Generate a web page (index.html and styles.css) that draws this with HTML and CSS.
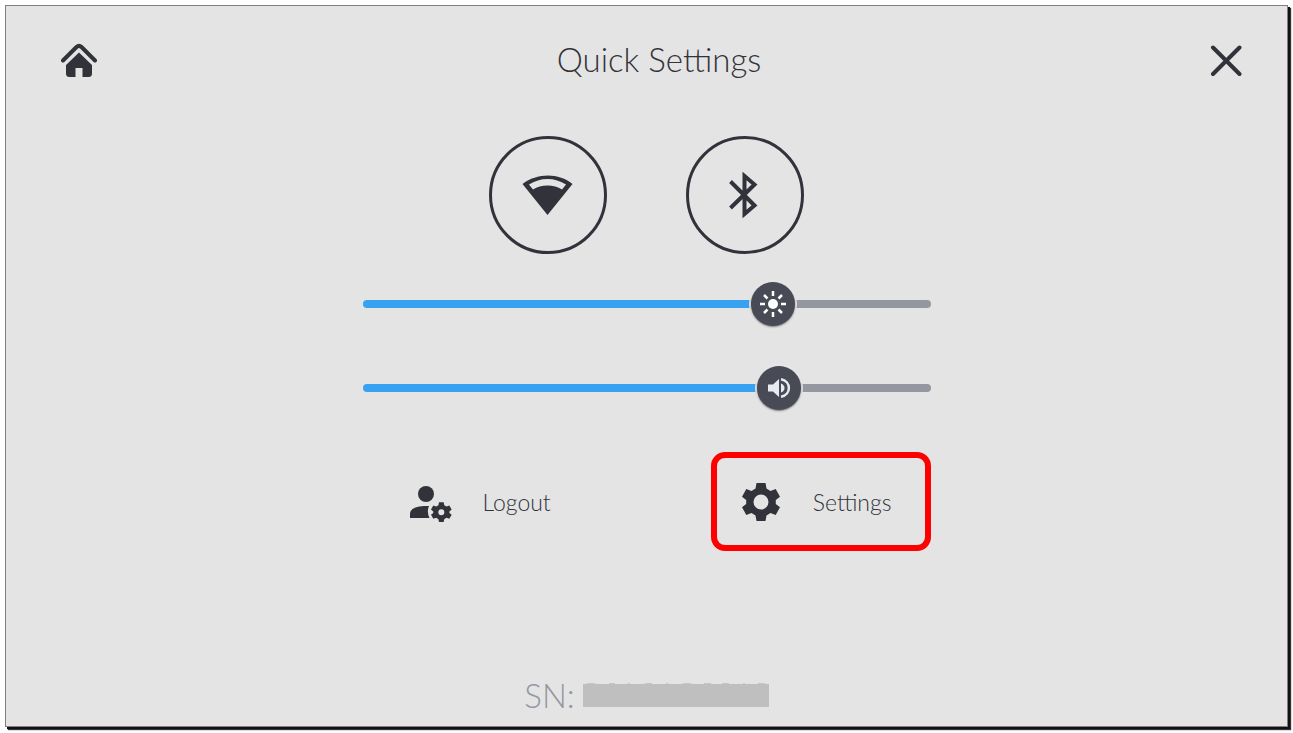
FILE: index.html
```
<!DOCTYPE html>
<html lang="en">
<head>
    <meta charset="UTF-8">
    <meta name="viewport" content="width=device-width, initial-scale=1.0">
    <title>Quick Settings</title>
    <link rel="stylesheet" href="styles.css">
</head>
<body>

<div class="panel">
    <header class="top-bar">
        <button class="icon-button home" type="button" aria-label="Home">
            <svg width="36" height="36" viewBox="0 0 36 36">
                <path d="M2 17.500 L15.500 4 Q18 1.700 20.500 4 L34 17.500" fill="none" stroke="currentColor" stroke-width="4" stroke-linecap="round"/>
                <path d="M18 9.500 L31 22 V30.500 Q31 34 27.500 34 H21.500 V25 H14.500 V34 H8.500 Q5 34 5 30.500 V22 Z" fill="currentColor"/>
            </svg>
        </button>
        <h1>Quick Settings</h1>
        <button class="icon-button" type="button" aria-label="Close">
            <svg width="32" height="32" viewBox="0 0 32 32">
                <path d="M3 2.500 L29.500 29 M29.500 2.500 L3 29" fill="none" stroke="currentColor" stroke-width="4" stroke-linecap="round"/>
            </svg>
        </button>
    </header>

    <main class="controls">
        <div class="toggles">
            <button class="toggle" type="button" aria-label="Wi-Fi">
                <svg width="52" height="42" viewBox="0 0 52 42">
                    <path fill="currentColor" fill-rule="evenodd" d="M.5 10 C15 -1.500 37 -1.500 50.500 10 L25.500 41 Z M7 10.500 L11 15.500 C19 10 32 10 40 15.500 L44 10.500 C33 3 18 3 7 10.500 Z"/>
                </svg>
            </button>
            <button class="toggle" type="button" aria-label="Bluetooth">
                <svg width="32" height="46" viewBox="0 0 32 46">
                    <path d="M1.500 9.500 L25.500 33.500 L15.500 42 V4 L25.500 12.500 L1.500 36" fill="none" stroke="currentColor" stroke-width="4"/>
                </svg>
            </button>
        </div>

        <div class="slider" style="--value: 0.742">
            <input type="range" min="0" max="1" step="0.001" value="0.742" aria-label="Brightness">
            <svg class="slider-icon" viewBox="0 0 44 44">
                <circle cx="22" cy="22" r="5" fill="#fff"/>
                <g stroke="#fff" stroke-width="2.500">
                    <path d="M22 9 V14 M22 30 V35 M9 22 H14 M30 22 H35 M13 13 L16.500 16.500 M27.500 27.500 L31 31 M31 13 L27.500 16.500 M16.500 27.500 L13 31"/>
                </g>
            </svg>
        </div>
        <div class="slider" style="--value: 0.753">
            <input type="range" min="0" max="1" step="0.001" value="0.753" aria-label="Volume">
            <svg class="slider-icon" viewBox="0 0 44 44">
                <path d="M11 18.500 H16 L22 13 V31 L16 25.500 H11 Z" fill="#e8eaf2"/>
                <path d="M24 17.500 Q27.500 19 27.500 22 Q27.500 25 24 26.500 Z" fill="#e8eaf2"/>
                <path d="M24 13.300 C34.500 15 34.500 29 24 30.700" fill="none" stroke="#e8eaf2" stroke-width="2.500"/>
            </svg>
        </div>

        <div class="actions">
            <button class="action" type="button">
                <svg width="44" height="40" viewBox="0 0 44 40">
                    <g fill="currentColor">
                        <circle cx="17" cy="12" r="8"/>
                        <path d="M1 36 V32 C1 26 9 23.500 20 24 Q17.500 30 20.500 36 Z"/>
                        <path fill-rule="evenodd" d="M30.300 20 h5 l.6 3.100 2.400 1.400 3-1.100 2.500 4.300-2.400 2 v1.600 l2.400 2-2.500 4.300-3-1.100-2.400 1.400-.6 3.100 h-5 l-.6-3.100-2.400-1.400-3 1.100-2.500-4.300 2.400-2 v-1.600 l-2.400-2 2.500-4.300 3 1.100 2.400-1.400 Z M36 30.500 a3.200 3.200 0 1 0-6.400 0 3.200 3.200 0 1 0 6.400 0 Z" transform="translate(1.500 1.500) scale(.94)"/>
                    </g>
                </svg>
                <span>Logout</span>
            </button>
            <button class="action highlighted" type="button">
                <svg width="38" height="40" viewBox="0 0 38 40">
                    <path fill="currentColor" fill-rule="evenodd" d="M14.500 1 H23.500 L24.500 6.500 L28.500 9 L33.700 7 L38 14.800 L33.800 18 V22 L38 25.200 L33.700 33 L28.500 31 L24.500 33.500 L23.500 39 H14.500 L13.500 33.500 L9.500 31 L4.300 33 L0 25.200 L4.200 22 V18 L0 14.800 L4.300 7 L9.500 9 L13.500 6.500 Z M26.500 20 a7.500 7.500 0 1 0-15 0 a7.500 7.500 0 1 0 15 0 Z"/>
                </svg>
                <span>Settings</span>
            </button>
        </div>
    </main>

    <footer class="serial">
        <span>SN:</span>
        <svg class="serial-mask" width="186" height="24" viewBox="0 0 186 24">
            <path d="M4 .5 H12 M26 .5 H32 M45 .5 H47 M62 .5 H69 M83 .5 H85 M100 .5 H108 M121 .5 H128 M139 .5 H146 M160 .5 H162 M175 .5 H182" stroke="#c4c5c9"/>
            <rect y="1" width="186" height="23" fill="#bfbfbf"/>
        </svg>
    </footer>
</div>

</body>
</html>
```

FILE: styles.css
```
* {
    box-sizing: border-box;
}
body {
    margin: 0;
    padding: 5px 5px 6px;
    background-color: #fff;
    font-family: Lato, "Liberation Sans", sans-serif;
    font-weight: 300;
    color: #32333a;
}
button {
    padding: 0;
    border: none;
    background: none;
    font: inherit;
    color: inherit;
    cursor: pointer;
}
svg {
    display: block;
    flex-shrink: 0;
}
.panel {
    display: flex;
    flex-direction: column;
    min-height: calc(100vh - 11px);
    padding-bottom: 11px;
    background-color: #e4e4e4;
    border: 1px solid #7f7f7f;
    box-shadow: 2px 2px 0 #111, 3px 3px 1px #333;
}
.top-bar {
    display: flex;
    align-items: center;
    justify-content: space-between;
    height: 110px;
    padding: 0 45px 0 55px;
}
.home {
    width: 47px;
}
.top-bar h1 {
    margin: 0 0 4px;
    font-size: 33px;
    line-height: 40px;
    font-weight: 300;
}
.controls {
    width: 568px;
    max-width: 100%;
    margin: 0 auto;
}
.toggles {
    display: flex;
    justify-content: center;
    gap: 79px;
    padding: 20px 0 28px;
}
.toggle {
    display: flex;
    align-items: center;
    justify-content: center;
    width: 118px;
    height: 118px;
    border: 3px solid #32333a;
    border-radius: 50%;
}
.slider {
    position: relative;
    height: 44px;
    margin-bottom: 40px;
}
.slider input {
    display: block;
    width: 100%;
    height: 44px;
    margin: 0;
    background: none;
    -webkit-appearance: none;
    appearance: none;
}
.slider input::-webkit-slider-runnable-track {
    height: 8px;
    border-radius: 4px;
    background: linear-gradient(to right, #37a2ef calc(22px + (100% - 44px) * var(--value)), #9497a0 0);
}
.slider input::-webkit-slider-thumb {
    -webkit-appearance: none;
    width: 44px;
    height: 44px;
    margin-top: -18px;
    border-radius: 50%;
    background: #484b56;
    box-shadow: 0 1px 2px #777, 0 0 0 2px #e8e8e8;
}
.slider-icon {
    position: absolute;
    top: 0;
    left: calc((100% - 44px) * var(--value));
    width: 44px;
    height: 44px;
    pointer-events: none;
}
.actions {
    display: flex;
    justify-content: space-between;
    margin-top: 42px;
}
.action {
    display: flex;
    align-items: center;
    gap: 30px;
    height: 99px;
    padding: 0 46px;
    font-size: 23px;
    line-height: 28px;
}
.highlighted {
    gap: 33px;
    padding: 0 33px 0 25px;
    border: 6px solid #f00;
    border-radius: 14px;
}
.serial {
    display: flex;
    align-items: center;
    justify-content: center;
    gap: 8px;
    margin-top: auto;
    font-size: 33px;
    line-height: 40px;
    color: #9497a0;
}
```
